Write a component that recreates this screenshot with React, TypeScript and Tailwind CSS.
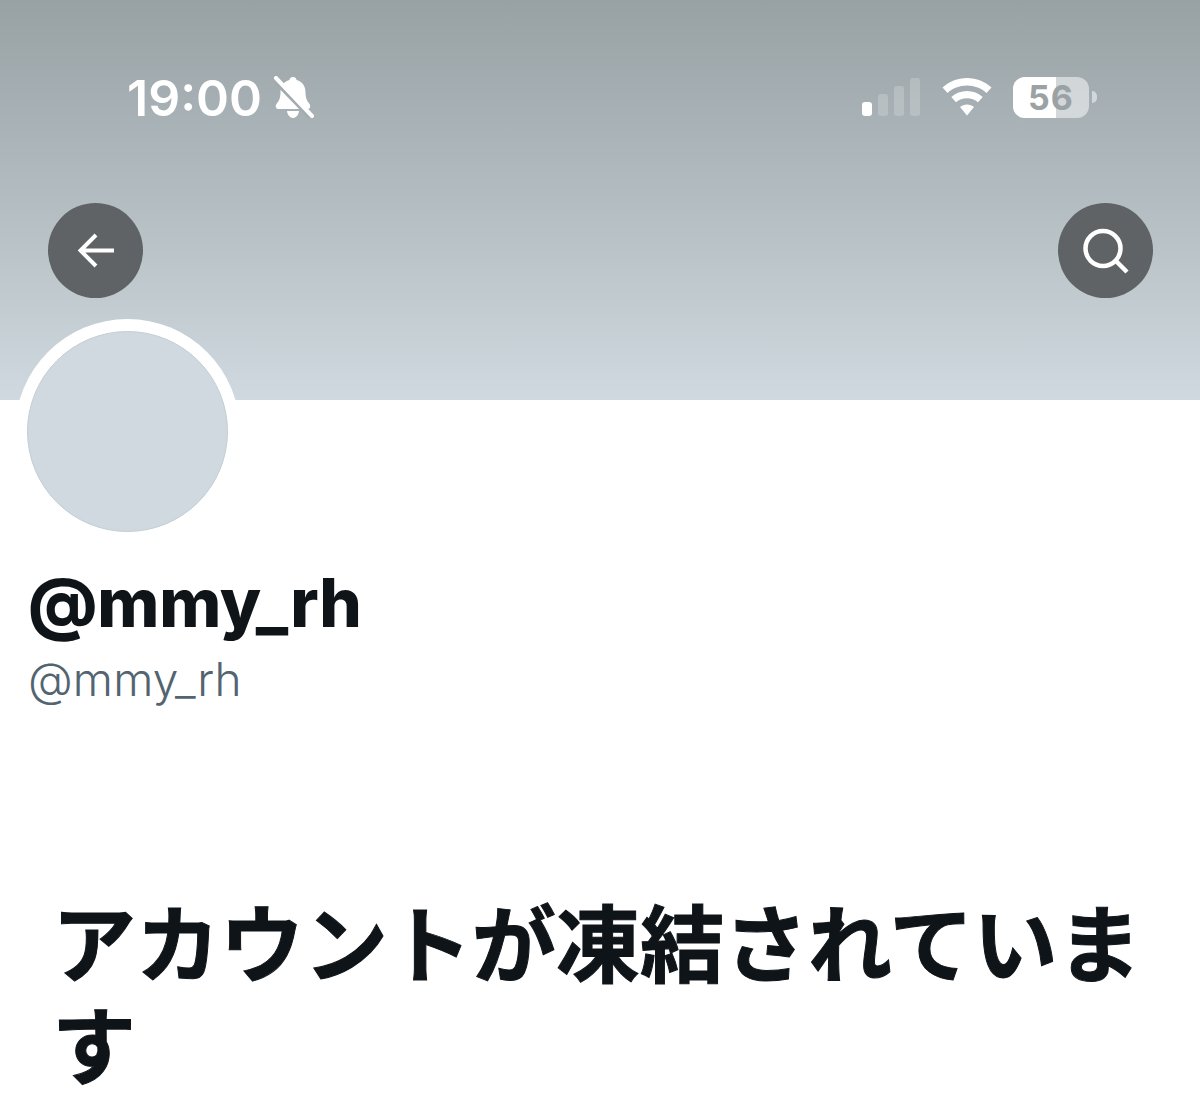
export default function App() {
  return (
    <div className="w-[1200px] h-[1119px] overflow-hidden bg-white font-['Inter','Noto_Sans_CJK_JP',sans-serif]">
      <header className="h-[400px] bg-gradient-to-b from-[#98a1a4] to-[#cfd9df] flex flex-col">
        <div className="h-[203px] flex items-start justify-between">
          <div className="flex items-start pl-[127px] pt-[68px]">
            <span className="text-[50px] leading-[60px] font-semibold text-white">19:00</span>
            <svg width="42" height="44" viewBox="0 0 42 44" className="ml-[10px] mt-[8px]">
              <path d="M21 1c2 0 3.300 1.300 3.600 3C30.500 5.500 33.500 10.500 33.500 16c0 6 1.500 9 4 12 1.300 1.600.8 5-1.500 5H6C3.700 33 3.200 29.600 4.500 28c2.500-3 4-6 4-12C8.500 10.500 11.500 5.500 17.400 4 17.700 2.300 19 1 21 1z" fill="#fff" />
              <path d="M15 35h12c-.5 4-3 7-6 7s-5.500-3-6-7z" fill="#fff" />
              <path d="M3 4l36 37" stroke="#a3abaf" strokeWidth="6" />
              <path d="M4 2l36 38" stroke="#fff" strokeWidth="4" strokeLinecap="round" />
            </svg>
          </div>
          <div className="flex items-start pr-[103px] pt-[77px]">
            <svg width="60" height="39" viewBox="0 0 60 39" className="mr-[20px]">
              <rect x="1" y="25" width="10" height="14" rx="3" fill="#fff" />
              <rect x="17" y="17" width="10" height="22" rx="3" fill="#fff" fillOpacity="0.2" />
              <rect x="33" y="9" width="10" height="30" rx="3" fill="#fff" fillOpacity="0.2" />
              <rect x="49" y="1" width="10" height="38" rx="3" fill="#fff" fillOpacity="0.2" />
            </svg>
            <svg width="52" height="39" viewBox="0 0 52 39" className="mr-[20px]">
              <path d="M26 1c9.500 0 18 3.600 24.500 9.500L45.500 16C40.500 11.300 33.500 8.500 26 8.500S11.500 11.300 6.500 16L1.500 10.500C8 4.600 16.500 1 26 1z" fill="#fff" />
              <path d="M26 14c6 0 11.500 2.300 15.700 6L37 25.300c-3-2.600-6.800-4-11-4s-8 1.400-11 4L10.300 20C14.500 16.300 20 14 26 14z" fill="#fff" />
              <path d="M26 27.500c2.600 0 5 .9 7 2.500L26 38.500l-7-8.500C21 28.400 23.400 27.500 26 27.500z" fill="#fff" />
            </svg>
            <div className="relative w-[76px] h-[41px] rounded-[12px] bg-white/50 overflow-hidden flex items-center justify-center">
              <div className="absolute left-0 top-0 h-full w-[43px] bg-white" />
              <span className="relative text-[34px] leading-none font-bold text-[#9aa2a6] tracking-[1px]">56</span>
            </div>
            <div className="w-[5px] h-[12px] ml-[3px] mt-[14px] rounded-r-full bg-white/50" />
          </div>
        </div>
        <div className="flex justify-between pl-[48px] pr-[47px]">
          <button className="w-[95px] h-[95px] rounded-full bg-[#5f6366] flex items-center justify-center">
            <svg width="37" height="35" viewBox="0 0 37 35" fill="none" stroke="#fff" strokeWidth="4">
              <path d="M37 17.500H3M19 2L3.500 17.500 19 33" />
            </svg>
          </button>
          <button className="w-[95px] h-[95px] rounded-full bg-[#5f6366] flex items-center justify-center">
            <svg width="46" height="46" viewBox="0 0 46 46" fill="none" stroke="#fff" strokeWidth="4.500">
              <circle cx="20" cy="20.500" r="17.500" />
              <path d="M33 33l11 11" />
            </svg>
          </button>
        </div>
      </header>
      <div className="pl-[15px] -mt-[81px]">
        <div className="w-[225px] h-[225px] rounded-full bg-white p-[12px]">
          <div className="w-full h-full rounded-full bg-[#cfd9df] border border-[#c4ced3]" />
        </div>
      </div>
      <div className="pl-[28px] pt-[19px]">
        <div className="text-[67px] leading-[80px] font-extrabold text-[#0f1419] tracking-[-0.2px]">@mmy_rh</div>
        <div className="text-[46px] leading-[60px] font-light text-[#536471] mt-[6px] tracking-[0.2px]">@mmy_rh</div>
      </div>
      <h1 className="pl-[52px] pr-[56px] pt-[186px] text-[84px] leading-[102px] font-bold [-webkit-text-stroke:1px_#0f1419] text-[#0f1419] break-all">
        アカウントが凍結されています
      </h1>
    </div>
  );
}
